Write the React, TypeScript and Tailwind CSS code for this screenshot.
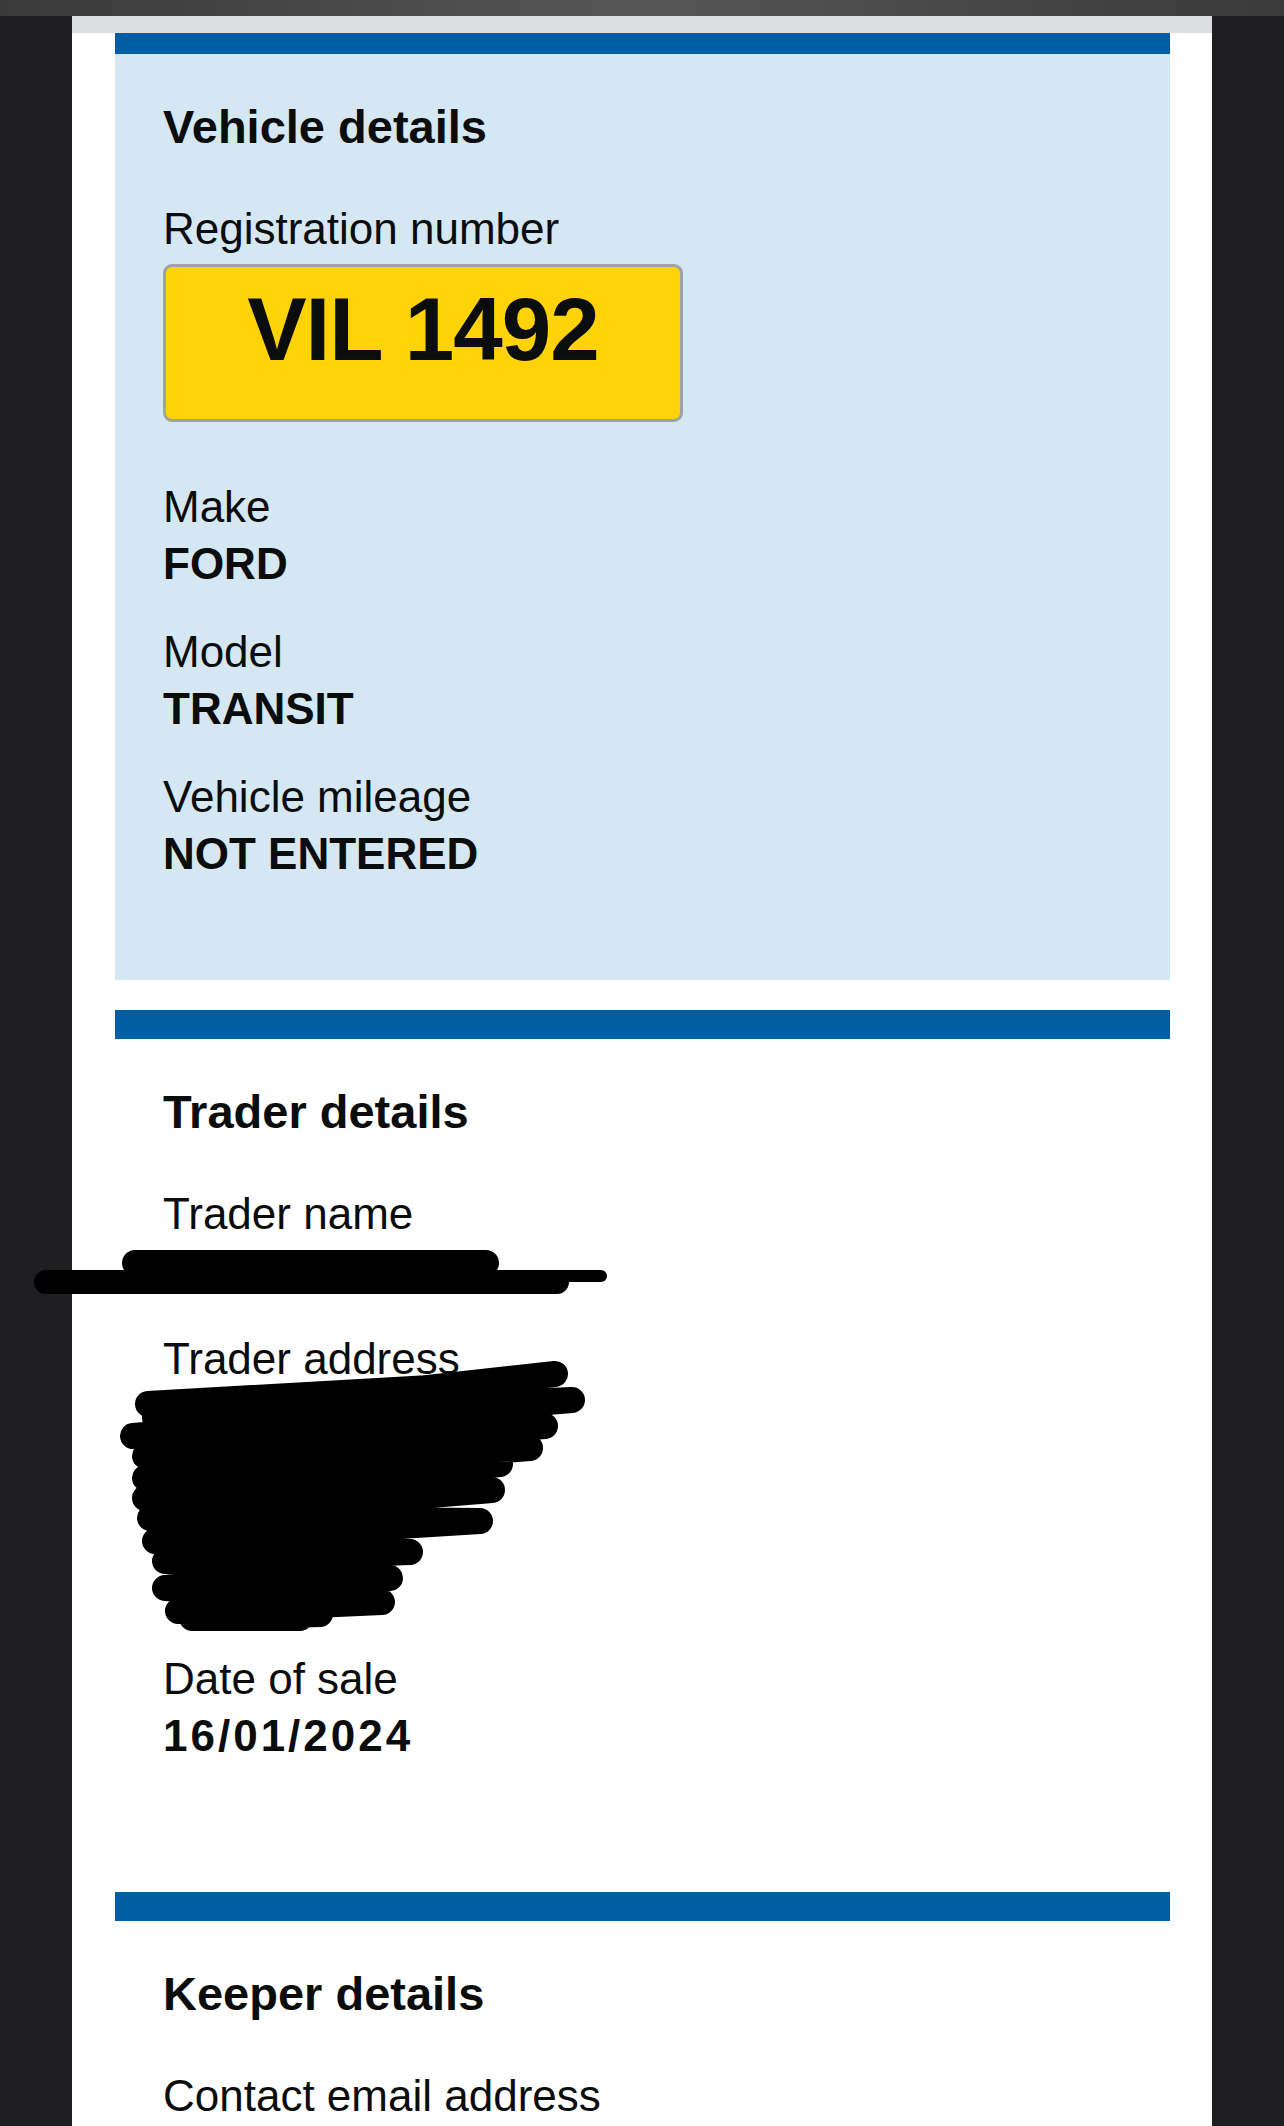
import { ReactNode } from 'react'
import clsx from 'clsx'

interface SectionProps {
  title: string
  tinted?: boolean
  firstBar?: boolean
  children: ReactNode
}

const Section = ({ title, tinted, firstBar, children }: SectionProps) => (
  <section className="mb-[30px]">
    <div className={clsx('bg-[#005ea5]', firstBar ? 'h-[21px]' : 'h-[29px]')} />
    <div className={clsx('px-[48px] pt-[45px] pb-[98px]', tinted && 'bg-[#d5e7f3]')}>
      <h2 className="text-[47px] leading-[56px] font-bold">{title}</h2>
      <dl className="mt-[45px] flex flex-col gap-[31px]">{children}</dl>
    </div>
  </section>
)

const Row = ({ label, value, className }: { label: string; value?: ReactNode; className?: string }) => (
  <div className={className}>
    <dt className="text-[44px] leading-[57px]">{label}</dt>
    {value !== undefined && <dd className="text-[44px] leading-[57px] font-bold">{value}</dd>}
  </div>
)

// redaction marks drawn over the trader values
const NameScribble = () => (
  <svg className="absolute left-[-133px] top-[4px]" width="590" height="52" viewBox="0 0 590 52">
    <g stroke="#000" strokeLinecap="round" fill="none">
      <line x1="105" y1="17" x2="456" y2="17" strokeWidth="26" />
      <line x1="16" y1="36" x2="527" y2="36" strokeWidth="24" />
      <line x1="465" y1="30" x2="571" y2="30" strokeWidth="12" />
    </g>
  </svg>
)

const AddressScribble = () => (
  <svg className="absolute left-[-63px] top-[-31px]" width="500" height="290" viewBox="0 0 500 290">
    <path
      d="M 48 48 L 330 32 L 455 18 L 55 62 L 472 44 L 33 80 L 445 70 L 45 100 L 430 92 L 45 122 L 400 108 L 45 142 L 392 134 L 50 162 L 380 165 L 55 185 L 310 196 L 65 205 L 290 222 L 65 232 L 282 246 L 78 255 L 220 258 L 92 262 L 200 262"
      stroke="#000"
      strokeWidth="26"
      strokeLinecap="round"
      strokeLinejoin="round"
      fill="none"
    />
  </svg>
)

const Plate = ({ reg }: { reg: string }) => (
  <div className="mt-[7px] w-[520px] h-[158px] rounded-[9px] border-[3px] border-[#9ea3a7] bg-[#ffd307] flex justify-center pt-[18px]">
    <span className="text-[89px] leading-none font-bold tracking-[-1px]">{reg}</span>
  </div>
)

export default function App() {
  return (
    <div className="h-[2126px] overflow-hidden flex flex-col bg-[#1e1e20] text-[#0b0c0c] font-['Liberation_Sans',Arial,sans-serif]">
      <div className="h-[16px] shrink-0 bg-linear-to-r from-[#3a3a3a] via-[#565656] to-[#3a3a3a]" />
      <main className="flex-1 mx-[72px] bg-white">
        <div className="h-[17px] bg-[#dedfe0]" />
        <div className="pl-[43px] pr-[42px]">
          <Section title="Vehicle details" tinted firstBar>
            <div className="pb-[25px]">
              <dt className="text-[44px] leading-[57px]">Registration number</dt>
              <dd>
                <Plate reg="VIL 1492" />
              </dd>
            </div>
            <Row label="Make" value="FORD" />
            <Row label="Model" value="TRANSIT" />
            <Row label="Vehicle mileage" value="NOT ENTERED" />
          </Section>

          <Section title="Trader details">
            <div>
              <dt className="text-[44px] leading-[57px]">Trader name</dt>
              <dd className="relative h-[57px]">
                <NameScribble />
              </dd>
            </div>
            <div>
              <dt className="text-[44px] leading-[57px]">Trader address</dt>
              <dd className="relative h-[232px]">
                <AddressScribble />
              </dd>
            </div>
            <Row label="Date of sale" value={<span className="tracking-[3px]">16/01/2024</span>} />
          </Section>

          <Section title="Keeper details">
            <Row label="Contact email address" />
          </Section>
        </div>
      </main>
    </div>
  )
}
